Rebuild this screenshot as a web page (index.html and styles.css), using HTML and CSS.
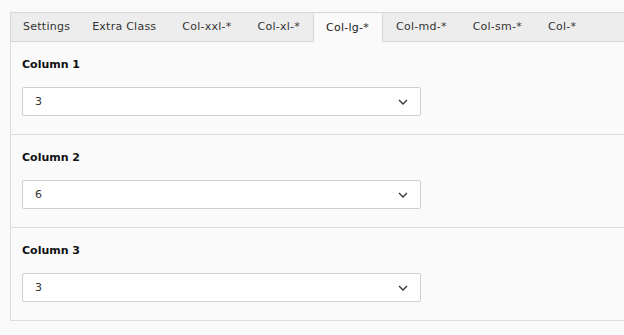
FILE: index.html
```
<!DOCTYPE html>
<html lang="en">
<head>
    <meta charset="UTF-8">
    <title>Columns</title>
    <link rel="stylesheet" href="styles.css">
</head>
<body>
    <div class="tabs">
        <div class="tab">Settings</div>
        <div class="tab">Extra Class</div>
        <div class="tab">Col-xxl-*</div>
        <div class="tab">Col-xl-*</div>
        <div class="tab active">Col-lg-*</div>
        <div class="tab">Col-md-*</div>
        <div class="tab">Col-sm-*</div>
        <div class="tab">Col-*</div>
    </div>
    <div class="panel">
        <div class="field">
            <label class="field-label">Column 1</label>
            <div class="select">
                <span>3</span>
                <svg class="chevron" width="10" height="6" viewBox="0 0 10 6"><path d="M1 1 L5 5 L9 1" fill="none" stroke="#333" stroke-width="1.3"/></svg>
            </div>
        </div>
        <div class="field">
            <label class="field-label">Column 2</label>
            <div class="select">
                <span>6</span>
                <svg class="chevron" width="10" height="6" viewBox="0 0 10 6"><path d="M1 1 L5 5 L9 1" fill="none" stroke="#333" stroke-width="1.3"/></svg>
            </div>
        </div>
        <div class="field">
            <label class="field-label">Column 3</label>
            <div class="select">
                <span>3</span>
                <svg class="chevron" width="10" height="6" viewBox="0 0 10 6"><path d="M1 1 L5 5 L9 1" fill="none" stroke="#333" stroke-width="1.3"/></svg>
            </div>
        </div>
    </div>
</body>
</html>
```
FILE: styles.css
```
body {
    margin: 12px 0 0 10px;
    background-color: #fafafa;
    font-family: "DejaVu Sans", Verdana, sans-serif;
    font-size: 11px;
    color: #333;
}
.tabs {
    display: flex;
    height: 28px;
    background-color: #ededed;
    border: 1px solid #d7d7d7;
    border-right: none;
}
.tab {
    padding: 0 13px 0 12px;
    line-height: 28px;
    letter-spacing: 0.25px;
    border-left: 1px solid transparent;
}
.tab:first-child {
    border-left: none;
    padding-right: 9px;
}
.tab.active {
    background-color: #fafafa;
    border: 1px solid #d7d7d7;
    border-bottom: none;
    margin-top: -1px;
    margin-bottom: -1px;
    line-height: 29px;
    color: #222;
}
.panel {
    background-color: #fafafa;
    border: 1px solid #dcdcdc;
    border-top: none;
    border-right: none;
}
.field {
    padding: 14px 0 18px 11px;
    border-bottom: 1px solid #dcdcdc;
}
.field:last-child {
    border-bottom: none;
}
.field-label {
    display: block;
    font-weight: bold;
    line-height: 18px;
    margin-bottom: 13px;
    color: #111;
}
.select {
    display: flex;
    justify-content: space-between;
    align-items: center;
    box-sizing: border-box;
    width: 399px;
    height: 29px;
    padding: 0 12px 0 12px;
    background-color: #fff;
    border: 1px solid #cfcfcf;
    border-radius: 2px;
}
.chevron {
    display: block;
}
```
